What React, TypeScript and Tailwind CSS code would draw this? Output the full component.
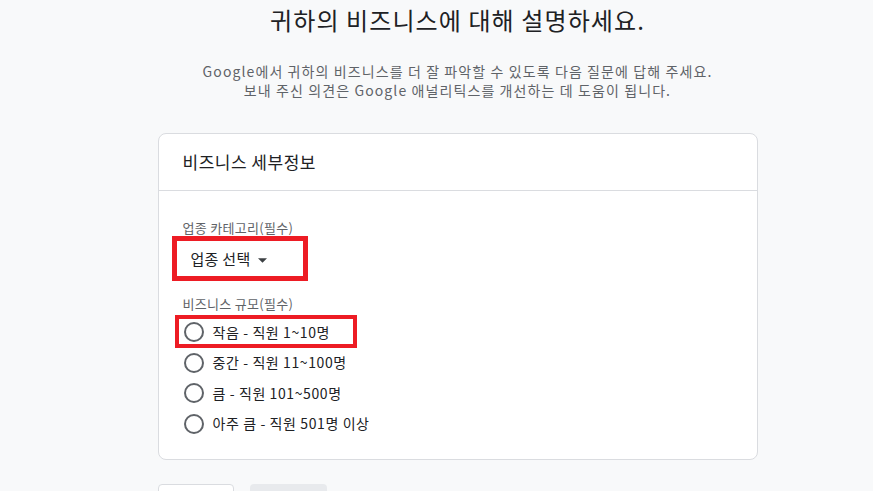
import React from "react";

const font = { fontFamily: '"Noto Sans CJK KR", "Noto Sans", Roboto, sans-serif' };

const sizes = ["작음 - 직원 1~10명", "중간 - 직원 11~100명", "큼 - 직원 101~500명", "아주 큼 - 직원 501명 이상"];

function Radio({ label }: { label: string }) {
  return (
    <label className="flex items-center h-[30.5px] gap-[9px]">
      <span className="w-[20px] h-[20px] rounded-full border-2 border-[#5f6368] shrink-0" />
      <span className="text-[14px] tracking-[0.6px] text-[#202124]">{label}</span>
    </label>
  );
}

export default function App() {
  return (
    <div className="min-h-[491px] h-[491px] overflow-hidden bg-[#f8f9fa] pl-[42px] flex flex-col items-center" style={font}>
      <h1 className="mt-[2px] text-[24px] leading-[36px] tracking-[1.1px] text-[#202124] font-normal">귀하의 비즈니스에 대해 설명하세요.</h1>
      <p className="mt-[24px] text-[14px] leading-[19px] tracking-[1.1px] text-[#5f6368] text-center">
        Google에서 귀하의 비즈니스를 더 잘 파악할 수 있도록 다음 질문에 답해 주세요.
        <br />
        보내 주신 의견은 Google 애널리틱스를 개선하는 데 도움이 됩니다.
      </p>
      <div className="mt-[33px] w-[600px] bg-white border border-[#dadce0] rounded-[8px]">
        <div className="h-[57px] px-[24px] flex items-center border-b border-[#dadce0]">
          <span className="text-[17px] tracking-[0.5px] text-[#202124]">비즈니스 세부정보</span>
        </div>
        <div className="px-[24px] pt-[29px] pb-[20px] relative">
          <div className="text-[13px] leading-[16px] tracking-[0.3px] text-[#5f6368]">업종 카테고리(필수)</div>
          <div className="relative h-[44px] flex items-center pl-[8px] mt-[1px]">
            <span className="text-[15px] tracking-[0.3px] text-[#202124]">업종 선택</span>
            <svg width="9" height="5" viewBox="0 0 10 5" className="ml-[7px] mt-[2px]">
              <path d="M0 0 L10 0 L5 5 Z" fill="#3c4043" />
            </svg>
            <div className="absolute left-[-11px] top-[-1px] w-[136px] h-[45px] border-[5px] border-[#ed1c24]" />
          </div>
          <div className="mt-[15px] text-[13px] leading-[16px] tracking-[0.3px] text-[#5f6368]">비즈니스 규모(필수)</div>
          <div className="relative mt-[5px] pl-[1px]">
            {sizes.map((s) => (
              <Radio key={s} label={s} />
            ))}
            <div className="absolute left-[-8px] top-[-2px] w-[182px] h-[33px] border-[4px] border-[#ed1c24]" />
          </div>
        </div>
      </div>
      <div className="mt-[24px] w-[600px] flex gap-[16px]">
        <div className="w-[76px] h-[36px] bg-white border border-[#dadce0] rounded-[4px]" />
        <div className="w-[77px] h-[36px] bg-[#e8eaed] rounded-[4px]" />
      </div>
    </div>
  );
}
